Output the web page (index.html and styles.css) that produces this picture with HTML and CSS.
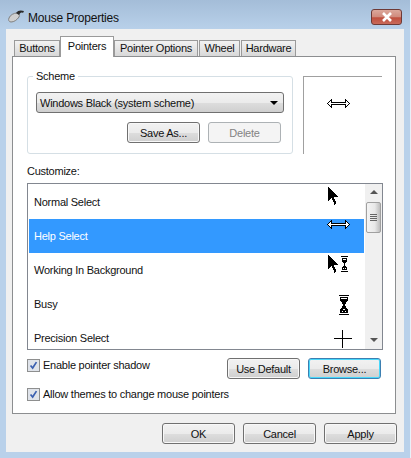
FILE: index.html
```html
<!DOCTYPE html>
<html lang="en">
<head>
    <title>Mouse Properties</title>
    <link rel="stylesheet" href="styles.css">
</head>
<body>

<div class="window">
    <!-- Title bar -->
    <div class="titlebar">
        <svg class="app-icon" width="17" height="14" viewBox="0 0 17 14">
            <path d="M1 8 C2 5 6 3 9 3 C11 3 12 5 11 7 C9 10 6 12 3 12 C1 12 0 10 1 8Z" fill="#d0d0d0" stroke="#808080"/>
            <path d="M8 3 C10 0 13 0 16 1 L15 3 C13 2 12 3 11 5Z" fill="#2b2b2b"/>
        </svg>
        <span class="title">Mouse Properties</span>
        <div class="close">
            <svg width="14" height="10" viewBox="0 0 14 10">
                <path d="M3 1 L11 9 M11 1 L3 9" stroke="#fff" stroke-width="2.6" fill="none"/>
            </svg>
        </div>
    </div>

    <div class="client">
        <div class="tabs">
            <div class="tab tab-buttons">Buttons</div>
            <div class="tab active">Pointers</div>
            <div class="tab tab-options">Pointer Options</div>
            <div class="tab tab-wheel">Wheel</div>
            <div class="tab tab-hardware">Hardware</div>
        </div>

        <div class="panel">
            <div class="top-row">
                <div class="group">
                    <span class="legend">Scheme</span>
                    <div class="select">
                        <span>Windows Black (system scheme)</span>
                        <i class="select-arrow"></i>
                    </div>
                    <div class="group-buttons">
                        <button class="btn">Save As...</button>
                        <button class="btn disabled">Delete</button>
                    </div>
                </div>
                <div class="preview">
                    <svg class="cursor" width="32" height="32" viewBox="0 0 32 32">
                        <path d="M0.5 4.5 L4.5 0.5 V3.5 H18.5 V0.5 L22.5 4.5 L18.5 8.5 V5.5 H4.5 V8.5Z" fill="#fff" stroke="#000"/>
                    </svg>
                </div>
            </div>

            <div class="customize-label">Customize:</div>

            <div class="list">
                <div class="rows">
                    <div class="row">
                        <span>Normal Select</span>
                        <svg class="cursor" width="32" height="32" viewBox="0 0 32 32">
                            <path d="M1 1 V15 L4.5 12 L7.5 18.5 L9.5 17.5 L6.5 11 H11Z" fill="#000"/>
                        </svg>
                    </div>
                    <div class="row selected">
                        <span>Help Select</span>
                        <svg class="cursor" width="32" height="32" viewBox="0 0 32 32">
                            <path d="M0.5 4.5 L4.5 0.5 V3.5 H18.5 V0.5 L22.5 4.5 L18.5 8.5 V5.5 H4.5 V8.5Z" fill="#fff" stroke="#000"/>
                        </svg>
                    </div>
                    <div class="row">
                        <span>Working In Background</span>
                        <svg class="cursor" width="32" height="32" viewBox="0 0 32 32">
                            <path d="M1 1 V15 L4.5 12 L7.5 18.5 L9.5 17.5 L6.5 11 H11Z" fill="#000"/>
                            <path d="M14 2 H21 V3 H14Z M14 17 H21 V18 H14Z M15 4 H20 V7 L18 10 V11 L20 14 V16 H15 V14 L17 11 V10 L15 7Z" fill="#000"/>
                            <path d="M16 5 H19 V6 H16Z M16 14 H17 V15 H16Z M18 14 H19 V15 H18Z" fill="#fff"/>
                        </svg>
                    </div>
                    <div class="row">
                        <span>Busy</span>
                        <svg class="cursor" width="32" height="32" viewBox="0 0 32 32">
                            <path d="M12 7 H22 V8 H12Z M12 26 H22 V27 H12Z M13 9 H21 V12 L18 16.5 V17.5 L21 22 V25 H13 V22 L16 17.5 V16.5 L13 12Z" fill="#000"/>
                            <path d="M14 10 H20 V11 H14Z M16 21 H18 V22 H16Z M15 23 H16 V24 H15Z M18 23 H19 V24 H18Z" fill="#fff"/>
                        </svg>
                    </div>
                    <div class="row">
                        <span>Precision Select</span>
                        <svg class="cursor" width="32" height="32" viewBox="0 0 32 32">
                            <path d="M7 16 H25 V17 H7Z M15 8 H16 V26 H15Z" fill="#000"/>
                        </svg>
                    </div>
                </div>
                <div class="scrollbar">
                    <i class="scroll-up"></i>
                    <div class="thumb"><b></b><b></b><b></b><b></b></div>
                    <i class="scroll-down"></i>
                </div>
            </div>

            <div class="options">
                <div class="checks">
                    <label class="check"><svg class="checkbox" width="13" height="13" viewBox="0 0 13 13"><path d="M3 6.5 L5.5 9.5 L10 2.5" fill="none" stroke="#3a5fb0" stroke-width="2"/></svg>Enable pointer shadow</label>
                    <label class="check"><svg class="checkbox" width="13" height="13" viewBox="0 0 13 13"><path d="M3 6.5 L5.5 9.5 L10 2.5" fill="none" stroke="#3a5fb0" stroke-width="2"/></svg>Allow themes to change mouse pointers</label>
                </div>
                <div class="option-buttons">
                    <button class="btn">Use Default</button>
                    <button class="btn focused">Browse...</button>
                </div>
            </div>
        </div>

        <div class="footer">
            <button class="btn">OK</button>
            <button class="btn">Cancel</button>
            <button class="btn">Apply</button>
        </div>
    </div>
</div>

</body>
</html>
```

FILE: styles.css
```css
body {
    margin: 0;
    overflow: hidden;
    font-family: "Liberation Sans", Arial, sans-serif;
    font-size: 11px;
    letter-spacing: -0.25px;
    color: #111;
}
.window {
    width: 411px;
    height: 458px;
    box-sizing: border-box;
    background: linear-gradient(#a4bdd8 0, #b9d1ea 30px);
    border-right: 1px solid #e8f0f8;
}
.titlebar {
    height: 29px;
    display: flex;
    align-items: flex-start;
    padding: 9px 8px 0 8px;
    box-sizing: border-box;
}
.app-icon {
    margin-right: 3px;
    margin-top: 1px;
}
.title {
    flex: 1;
    font-size: 12px;
    letter-spacing: -0.2px;
    line-height: 18px;
}
.close {
    width: 31px;
    height: 16px;
    box-sizing: border-box;
    border: 1px solid #6e3a36;
    border-radius: 3px;
    background: linear-gradient(#dba89c 0, #d08a7c 50%, #bf4f3e 55%, #c96a5a 100%);
    display: flex;
    align-items: center;
    justify-content: center;
}
.client {
    margin: 0 6px 0 6px;
    width: 398px;
    height: 423px;
    box-sizing: border-box;
    background: #f0f0f0;
    padding: 7px 0 0 6px;
}
.tabs {
    display: flex;
    height: 20px;
    padding-left: 2px;
    align-items: flex-end;
}
.tab {
    height: 16px;
    line-height: 15px;
    text-align: center;
    white-space: nowrap;
    box-sizing: border-box;
    border: 1px solid #9a9a9a;
    border-bottom: 0;
    background: linear-gradient(#f2f2f2, #d8d8d8);
    margin-right: 1px;
}
.tab-buttons {
    width: 46px;
}
.tab-options {
    width: 84px;
}
.tab-wheel {
    width: 41px;
}
.tab-hardware {
    width: 55px;
}
.tab.active {
    width: 54px;
    height: 21px;
    background: #fff;
    margin: 0 0 -1px -1px;
    position: relative;
    z-index: 1;
    line-height: 19px;
}
.panel {
    width: 384px;
    height: 358px;
    box-sizing: border-box;
    background: #fff;
    border: 1px solid #8c8e90;
    padding: 19px 0 0 14px;
}
.top-row {
    display: flex;
    gap: 10px;
}
.group {
    width: 266px;
    height: 78px;
    box-sizing: border-box;
    border: 1px solid #d5dfe5;
    border-radius: 3px;
    padding: 15px 8px 0 8px;
    position: relative;
}
.legend {
    position: absolute;
    top: -8px;
    left: 5px;
    padding: 0 3px;
    background: #fff;
    line-height: 15px;
}
.select {
    height: 21px;
    box-sizing: border-box;
    border: 1px solid #707070;
    border-radius: 3px;
    background: linear-gradient(#f2f2f2 0, #ebebeb 50%, #dddddd 52%, #cfcfcf 100%);
    display: flex;
    align-items: center;
    justify-content: space-between;
    padding: 0 5px 0 3px;
}
.select-arrow {
    border-left: 4px solid transparent;
    border-right: 4px solid transparent;
    border-top: 4px solid #000;
}
.group-buttons {
    display: flex;
    gap: 8px;
    padding-left: 91px;
    margin-top: 9px;
}
.btn {
    width: 73px;
    height: 21px;
    box-sizing: border-box;
    padding: 0;
    font: inherit;
    letter-spacing: inherit;
    color: #111;
    border: 1px solid #707070;
    border-radius: 3px;
    background: linear-gradient(#f2f2f2 0, #ebebeb 50%, #dddddd 52%, #cfcfcf 100%);
    box-shadow: inset 0 0 0 1px #f8f8f8;
}
.btn.disabled {
    color: #838383;
    border-color: #adb2b5;
    background: #f4f4f4;
    box-shadow: none;
}
.btn.focused {
    border-color: #3c7fb1;
    box-shadow: inset 0 0 0 1px #48d8fb;
}
.preview {
    width: 79px;
    height: 78px;
    box-sizing: border-box;
    border-top: 1px solid #a0a0a0;
    border-left: 1px solid #a0a0a0;
    padding: 22px 0 0 23px;
}
.cursor {
    display: block;
    flex: none;
    shape-rendering: crispEdges;
}
.customize-label {
    margin-top: 10px;
    line-height: 15px;
}
.list {
    width: 356px;
    height: 167px;
    margin-top: 4px;
    box-sizing: border-box;
    border: 1px solid #828790;
    display: flex;
    overflow: hidden;
}
.rows {
    width: 335px;
    margin: 1px 0 0 1px;
    overflow: hidden;
}
.row {
    height: 34px;
    display: flex;
    justify-content: space-between;
    align-items: flex-start;
    padding: 1px 5px 0 5px;
    box-sizing: border-box;
    overflow: hidden;
}
.row span {
    line-height: 33px;
}
.row.selected {
    background: #3399ff;
    color: #fff;
}
.scrollbar {
    width: 17px;
    margin-left: 1px;
    background: #f0f0f0;
    display: flex;
    flex-direction: column;
    align-items: center;
    position: relative;
}
.scroll-up {
    margin-top: 6px;
    border-left: 4px solid transparent;
    border-right: 4px solid transparent;
    border-bottom: 4px solid #555;
}
.thumb {
    margin-top: 8px;
    width: 15px;
    height: 31px;
    box-sizing: border-box;
    border: 1px solid #a0a0a0;
    border-radius: 2px;
    background: linear-gradient(90deg, #f4f4f4, #e8e8e8 60%, #bdbdbd);
    display: flex;
    flex-direction: column;
    align-items: center;
    justify-content: center;
    gap: 1px;
}
.thumb b {
    width: 7px;
    height: 1px;
    background: #666;
}
.scroll-down {
    margin-top: auto;
    margin-bottom: 7px;
    border-left: 4px solid transparent;
    border-right: 4px solid transparent;
    border-top: 4px solid #555;
}
.options {
    display: flex;
    width: 354px;
    margin-top: 8px;
}
.checks {
    flex: 1;
    min-width: 0;
    width: 0;
    display: flex;
    flex-direction: column;
    gap: 14px;
}
.check {
    display: flex;
    align-items: center;
    gap: 3px;
    height: 15px;
    line-height: 15px;
    white-space: nowrap;
}
.checkbox {
    flex: none;
    box-sizing: border-box;
    border: 1px solid #8e8f8f;
    background: #dfe3ea;
}
.option-buttons {
    flex: none;
    display: flex;
    align-items: flex-start;
    gap: 8px;
}
.footer {
    display: flex;
    gap: 8px;
    justify-content: flex-end;
    width: 385px;
    margin-top: 9px;
}
```
